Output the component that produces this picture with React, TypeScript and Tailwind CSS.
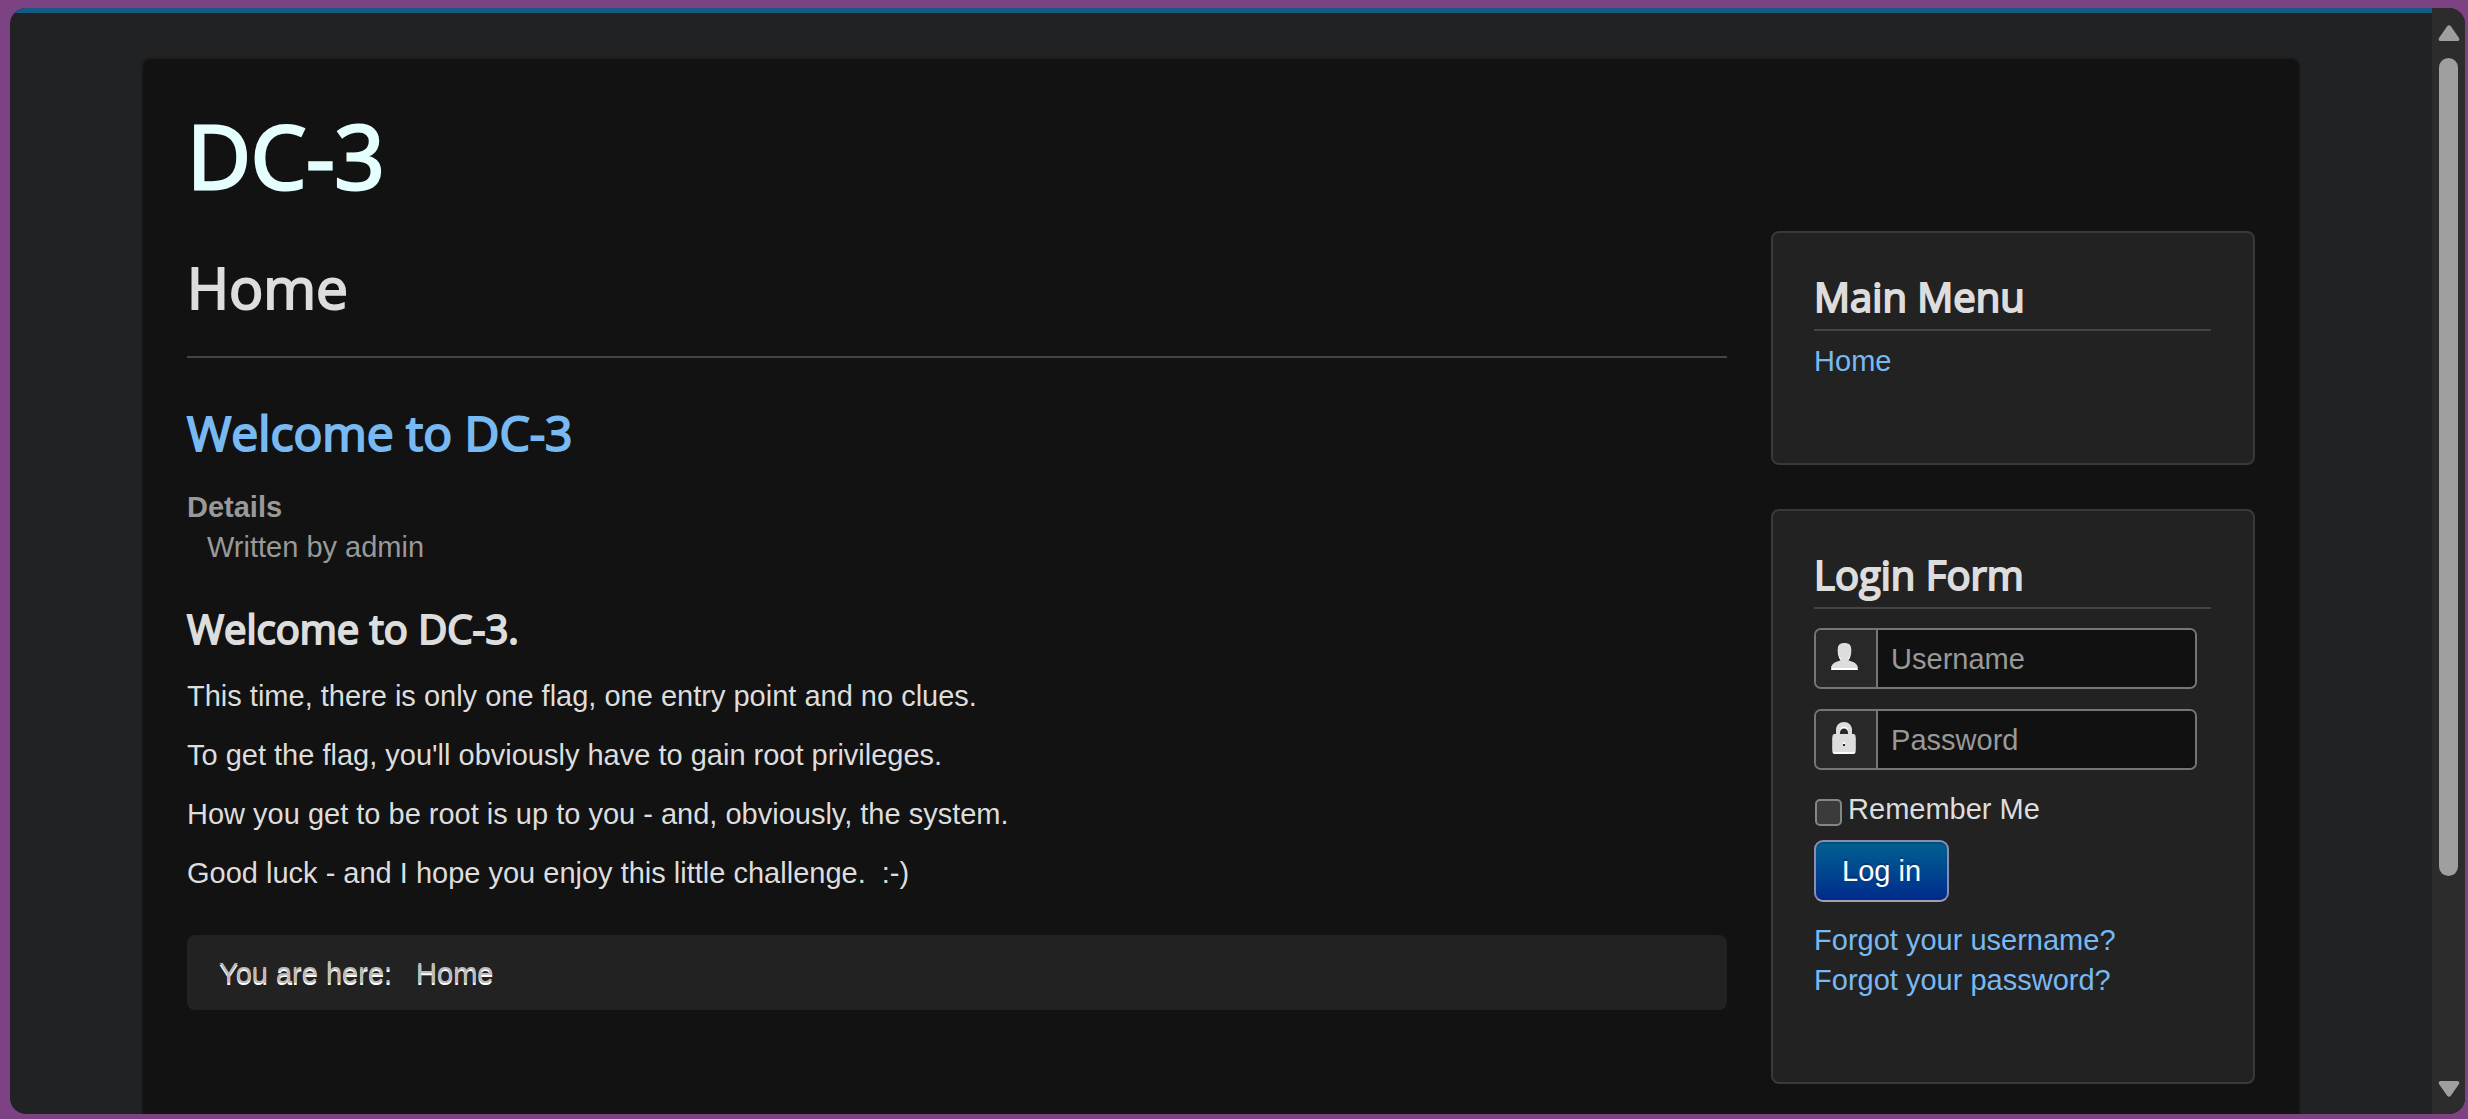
import { useState } from "react";
import type { FormEvent, ReactNode } from "react";

const paragraphs = [
  "This time, there is only one flag, one entry point and no clues.",
  "To get the flag, you'll obviously have to gain root privileges.",
  "How you get to be root is up to you - and, obviously, the system.",
  "Good luck - and I hope you enjoy this little challenge.\u00a0 :-)",
];

const UserIcon = ({ label }: { label: string }) => (
  <svg
    viewBox="0 0 27 25"
    className="w-[27px] h-[25px] overflow-visible fill-[#dddddd] [filter:drop-shadow(0_2px_0_#ffffff)]"
    role="img"
    aria-label={label}
  >
    <path d="M13.500 0C9 0 6.800 2 6.800 6C6.800 8 7 9.500 7.500 11C8 13 9 14.500 10 15.500C10.300 17 9.500 17.600 7 18.200C3 19.300 0.300 21.500 0 25H27C26.700 21.500 24 19.300 20 18.200C17.500 17.600 16.700 17 17 15.500C18 14.500 19 13 19.500 11C20 9.500 20.200 8 20.200 6C20.200 2 18 0 13.500 0Z" />
  </svg>
);

const LockIcon = ({ label }: { label: string }) => (
  <svg
    viewBox="0 0 24 30"
    className="w-6 h-[30px] overflow-visible fill-[#dddddd] [filter:drop-shadow(0_2px_0_#ffffff)]"
    role="img"
    aria-label={label}
  >
    <path
      fillRule="evenodd"
      d="M4 12V8C4 3 7.500 0 12 0S20 3 20 8V12H21.500Q23.500 12 23.500 14V28Q23.500 30 21.500 30H2.500Q0.500 30 0.500 28V14Q0.500 12 2.500 12ZM8 12H16V9C16 6 14.500 4.500 12 4.500S8 6 8 9ZM11 20V24H13V20Z"
    />
  </svg>
);

const SideModule = ({ title, children }: { title: string; children: ReactNode }) => (
  <section className="bg-[#222222] border-2 border-[#393939] rounded-lg pl-[41px] pr-[42px] pt-11">
    <h3 className="font-['Open_Sans',sans-serif] text-[40px] leading-10 text-[#dddddd] [-webkit-text-stroke:2px_#dddddd] pb-3 border-b-2 border-[#444444]">
      {title}
    </h3>
    {children}
  </section>
);

const LoginField = ({
  id,
  type,
  label,
  icon,
}: {
  id: string;
  type: string;
  label: string;
  icon: ReactNode;
}) => (
  <div className="flex h-[61px] mr-[14px] border-2 border-[#767676] rounded-[7px] overflow-hidden">
    <label
      htmlFor={id}
      className="w-[62px] shrink-0 flex justify-center items-center pb-[6px] pr-1 bg-[#282828] border-r-2 border-[#767676]"
    >
      {icon}
    </label>
    <input
      id={id}
      type={type}
      placeholder={label}
      className="min-w-0 flex-1 px-[13px] bg-[#111111] text-[#dddddd] placeholder:text-[#999999] outline-none"
    />
  </div>
);

const ScrollBar = () => (
  <div className="w-[33px] shrink-0 bg-[#2c2c2c] flex flex-col items-center py-[17px]" aria-hidden="true">
    <svg viewBox="0 0 22 16" className="w-[22px] h-4 fill-[#9f9f9f] shrink-0">
      <path d="M9 1.500Q11 -1 13 1.500L21 13Q22 16 19.500 16H2.500Q0 16 1 13Z" />
    </svg>
    <div className="flex-1 w-[19px] pt-[17px]">
      <div className="h-[80%] rounded-full bg-[#9f9f9f]"></div>
    </div>
    <svg viewBox="0 0 22 16" className="w-[22px] h-4 fill-[#9f9f9f] shrink-0">
      <path d="M9 14.500Q11 17 13 14.500L21 3Q22 0 19.500 0H2.500Q0 0 1 3Z" />
    </svg>
  </div>
);

const App = () => {
  const [remember, setRemember] = useState(false);

  const handleSubmit = (e: FormEvent) => {
    e.preventDefault();
  };

  return (
    <div className="h-screen bg-[#7d4283] pt-2 pr-[3px] pb-[5px] pl-[10px]">
      <div className="h-full flex rounded-2xl overflow-hidden bg-[#212224] font-['Liberation_Sans',Arial,sans-serif] text-[29px] leading-10 text-[#dddddd]">
        <div className="flex-1 min-w-0 border-t-[5px] border-[#155a82] px-[133px] pt-[46px] overflow-hidden">
          <div className="min-h-full bg-[#121212] rounded-t-lg shadow-[0_0_0_2px_#1d1d1e] px-11 pt-[54px]">
            {/* Header */}
            <header className="pb-[34px]">
              <a
                href="#"
                className="block font-['Open_Sans',sans-serif] text-[88px] leading-[84px] text-[#e5ffff] [-webkit-text-stroke:3px_#e5ffff]"
              >
                DC-3
              </a>
            </header>

            <div className="flex items-start gap-11">
              {/* Article */}
              <main className="flex-1 min-w-0">
                <div className="border-b-2 border-[#444444] pt-5 pb-8">
                  <h1 className="font-['Open_Sans',sans-serif] text-[57px] leading-[73px] [-webkit-text-stroke:2px_#dddddd]">
                    Home
                  </h1>
                </div>
                <h2 className="mt-[42px] font-['Open_Sans',sans-serif] text-[48px] leading-[66px] [-webkit-text-stroke:2px_#78b9f2]">
                  <a href="#" className="text-[#78b9f2]">Welcome to DC-3</a>
                </h2>
                <dl className="mt-[21px] text-[#999999]">
                  <dt className="font-bold">Details</dt>
                  <dd className="ml-5">Written by admin</dd>
                </dl>
                <h3 className="mt-[42px] font-['Open_Sans',sans-serif] text-[40px] leading-10 [-webkit-text-stroke:2px_#dddddd]">
                  Welcome to DC-3.
                </h3>
                <div className="mt-[27px] flex flex-col gap-[19px]">
                  {paragraphs.map((text) => (
                    <p key={text}>{text}</p>
                  ))}
                </div>
                <nav aria-label="Breadcrumbs" className="mt-[42px] bg-[#222222] rounded-lg">
                  <ul className="flex gap-6 px-8 pt-[18px] pb-[17px] text-[#bbbbbb] [text-shadow:0_2px_0_#ffffff]">
                    <li>You are here:</li>
                    <li>Home</li>
                  </ul>
                </nav>
              </main>

              {/* Sidebar */}
              <aside className="w-[23.4%] shrink-0 flex flex-col gap-11">
                <SideModule title="Main Menu">
                  <nav className="pt-[10px] pb-[82px]">
                    <a href="#" className="text-[#78b9f2]">Home</a>
                  </nav>
                </SideModule>
                <SideModule title="Login Form">
                  <form onSubmit={handleSubmit} className="pt-[19px] pb-[82px]">
                    <div className="flex flex-col gap-5">
                      <LoginField id="username" type="text" label="Username" icon={<UserIcon label="Username" />} />
                      <LoginField id="password" type="password" label="Password" icon={<LockIcon label="Password" />} />
                    </div>
                    <div className="mt-[19px] flex items-center gap-[6px]">
                      <input
                        id="remember"
                        type="checkbox"
                        checked={remember}
                        onChange={(e) => setRemember(e.target.checked)}
                        className="mt-[7px] ml-px size-[27px] appearance-none bg-[#3b3b3b] border-2 border-[#858585] rounded-[5px] checked:bg-[#78b9f2]"
                      />
                      <label htmlFor="remember">Remember Me</label>
                    </div>
                    <button
                      type="submit"
                      className="mt-[11px] block h-[62px] px-[26px] rounded-[9px] border-2 border-[#8c8cb0] border-b-[#a0a0b0] bg-gradient-to-b from-[#006090] to-[#002a8c] text-white [text-shadow:0_-2px_0_rgba(0,0,0,0.25)] shadow-[inset_0_2px_0_rgba(0,0,0,0.15)]"
                    >
                      Log in
                    </button>
                    <ul className="mt-[18px] text-[#78b9f2]">
                      <li>
                        <a href="#">Forgot your username?</a>
                      </li>
                      <li>
                        <a href="#">Forgot your password?</a>
                      </li>
                    </ul>
                  </form>
                </SideModule>
              </aside>
            </div>
          </div>
        </div>
        <ScrollBar />
      </div>
    </div>
  );
};

export default App;
